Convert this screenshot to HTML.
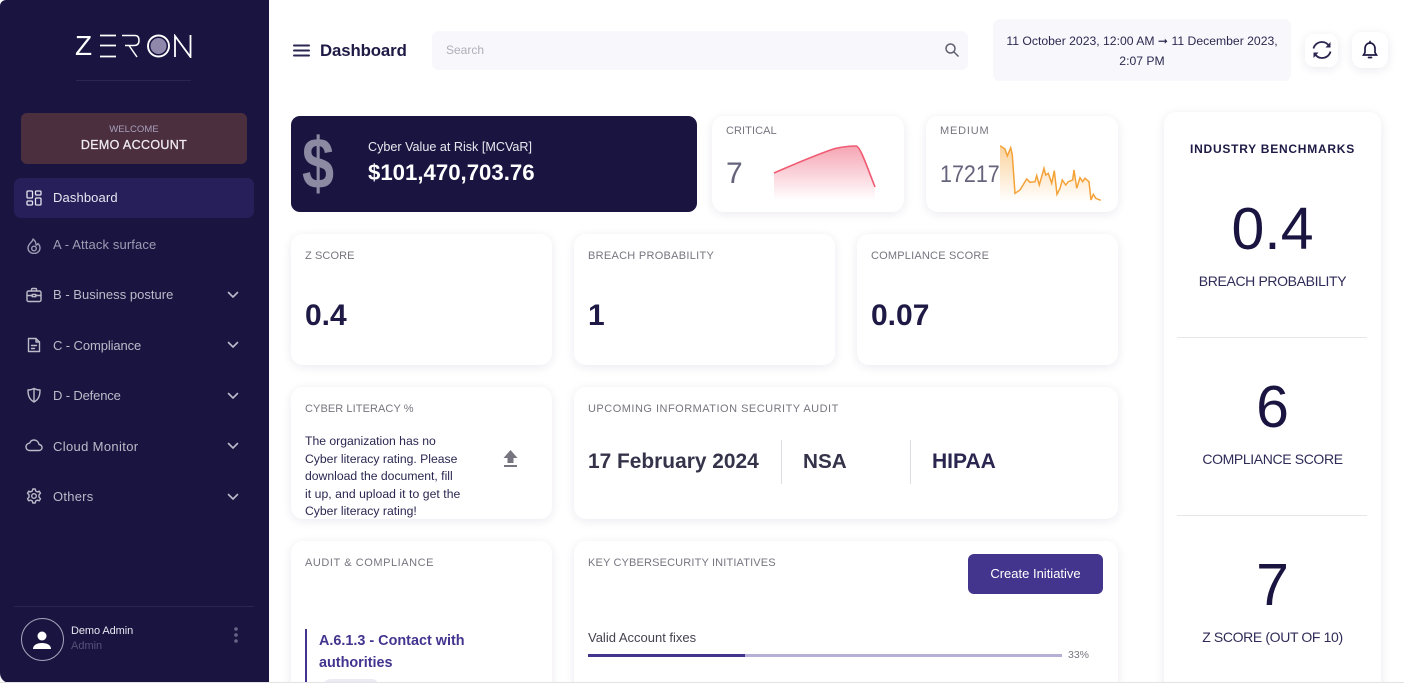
<!DOCTYPE html>
<html><head><meta charset="utf-8"><title>Dashboard</title>
<style>
*{box-sizing:border-box;margin:0;padding:0}
html,body{width:1404px;height:683px;overflow:hidden;background:#fff}
body{position:relative;font-family:"Liberation Sans","Noto Sans CJK JP",sans-serif;color:#1a1440}
.a{position:absolute;white-space:nowrap}
#side{position:absolute;left:0;top:0;width:269px;height:683px;background:#1a1440;border-radius:6px 0 0 10px}
.card{position:absolute;background:#fff;border-radius:12px;box-shadow:0 2px 10px rgba(30,20,80,.09)}
.lbl{position:absolute;font-size:11px;color:#77757f;white-space:nowrap}
.nav{position:absolute;left:53px;font-size:13px;color:#bdbac9;white-space:nowrap;letter-spacing:.12px}
.big{position:absolute;font-size:30px;font-weight:700;color:#1e1a45;white-space:nowrap}
.num{position:absolute;left:1164px;width:217px;text-align:center;font-size:59px;color:#1a1440;line-height:60px}
.cap{position:absolute;left:1164px;width:217px;text-align:center;font-size:14px;letter-spacing:-.37px;color:#2f2b58}
svg{position:absolute;display:block}
.ic{fill:none;stroke:#bdbac9;stroke-width:1.4;stroke-linecap:round;stroke-linejoin:round}
</style></head><body>
<div id="side"></div>

<!-- logo -->
<div class="a" style="left:75px;top:31px;font-size:28px;line-height:30px;color:#fff;font-weight:400">Z</div>
<svg style="left:75px;top:34px" width="117" height="24" viewBox="0 0 117 24" fill="none" stroke="#fff" stroke-width="1.7">
<path d="M25 1.500H41M25 11.500H41M25 22.500H41"/>
<path d="M47 1.500H60Q64 1.500 64 6.500Q64 11.500 59 11.500H50M54 11.500L62 23" stroke-width="1.500"/>
<circle cx="83.500" cy="12" r="10.500" stroke-width="1.900"/>
<circle cx="83.500" cy="12" r="8" fill="#8f88ab" stroke="none"/>
<path d="M100 23V2L115.500 23V1" stroke-width="1.800"/>
</svg>
<div class="a" style="left:76px;top:80px;width:115px;height:1px;background:#2b2552"></div>

<div class="a" style="left:21px;top:113px;width:226px;height:51px;background:#4c2f3f;border-radius:6px"></div>
<div class="a" style="left:21px;top:124px;width:226px;text-align:center;font-size:9.500px;letter-spacing:.05px;color:#a79fba">WELCOME</div>
<div class="a" style="left:21px;top:138px;width:226px;text-align:center;font-size:12.500px;letter-spacing:.35px;color:#f0ecf0;-webkit-text-stroke:.25px #f0ecf0">DEMO ACCOUNT</div>

<div class="a" style="left:14px;top:178px;width:240px;height:40px;background:#261f5a;border-radius:7px"></div>
<svg style="left:26px;top:190px" width="16" height="16" viewBox="0 0 16 16" fill="none" stroke="#e6e4ee" stroke-width="1.300"><rect x="1" y="1" width="5.500" height="7" rx="1"/><rect x="9.500" y="1" width="5.500" height="4" rx="1"/><rect x="1" y="11" width="5.500" height="4" rx="1"/><rect x="9.500" y="8" width="5.500" height="7" rx="1"/></svg>
<div class="nav" style="top:190px;color:#e8e6f0">Dashboard</div>

<svg class="ic" style="left:26px;top:237px;stroke:#9f9bb3" width="16" height="17" viewBox="0 0 16 17"><path d="M7 2C7 5 2 6.500 2 11a6 5.500 0 0 0 12 0C14 9 13 7.500 12 6.500C11.500 7.500 11 8 10 8C10 6 9 3.500 7 2Z"/><circle cx="8" cy="11.500" r="2.300"/></svg>
<div class="nav" style="top:237px;color:#9f9bb3">A - Attack surface</div>

<svg class="ic" style="left:26px;top:287px" width="16" height="16" viewBox="0 0 16 16"><rect x="1" y="4" width="14" height="10.500" rx="1.500"/><path d="M5.500 4V2.500a1 1 0 0 1 1-1h3a1 1 0 0 1 1 1V4M1 8.500H6M10 8.500H15"/><rect x="6.200" y="7.500" width="3.600" height="2.200"/></svg>
<div class="nav" style="top:287px;letter-spacing:.02px">B - Business posture</div>

<svg class="ic" style="left:26px;top:337px" width="16" height="16" viewBox="0 0 16 16"><path d="M2.500 1.500H10L13.500 5V14.500H2.500ZM5.500 8.500H10.500M5.500 11.500H8.500M10 1.500V5H13.500"/></svg>
<div class="nav" style="top:338px;letter-spacing:-.1px">C - Compliance</div>

<svg class="ic" style="left:26px;top:387px" width="16" height="16" viewBox="0 0 16 16"><path d="M8 1.500C10 2.500 12 3 14 3C14 9 12.500 12.500 8 15C3.500 12.500 2 9 2 3C4 3 6 2.500 8 1.500ZM8 1.500V15"/></svg>
<div class="nav" style="top:388px;letter-spacing:-.15px">D - Defence</div>

<svg class="ic" style="left:25px;top:438px" width="18" height="15" viewBox="0 0 18 15"><path d="M4.500 12.500H14C16 12.500 17 11 17 9.500C17 8 16 6.800 14 6.500C13.500 3.800 11.500 2 9 2C7 2 5.500 3 4.800 5C2.500 5.500 1 7 1 9C1 11 2.500 12.500 4.500 12.500Z"/></svg>
<div class="nav" style="top:439px;letter-spacing:.35px">Cloud Monitor</div>

<svg class="ic" style="left:26px;top:488px" width="16" height="16" viewBox="0 0 16 16"><circle cx="8" cy="8" r="2.300"/><path d="M6.800 1H9.200L9.700 3L11.400 3.900L13.300 3.200L14.500 5.300L13 6.700V9.300L14.500 10.700L13.300 12.800L11.400 12.100L9.700 13L9.200 15H6.800L6.300 13L4.600 12.100L2.700 12.800L1.500 10.700L3 9.300V6.700L1.500 5.300L2.700 3.200L4.600 3.900L6.300 3Z"/></svg>
<div class="nav" style="top:489px;letter-spacing:.25px">Others</div>

<svg class="ic" style="left:226px;top:291px;stroke-width:1.600" width="14" height="8" viewBox="0 0 14 8"><path d="M2.500 1.500L7 6L11.500 1.500"/></svg>
<svg class="ic" style="left:226px;top:341px;stroke-width:1.600" width="14" height="8" viewBox="0 0 14 8"><path d="M2.500 1.500L7 6L11.500 1.500"/></svg>
<svg class="ic" style="left:226px;top:392px;stroke-width:1.600" width="14" height="8" viewBox="0 0 14 8"><path d="M2.500 1.500L7 6L11.500 1.500"/></svg>
<svg class="ic" style="left:226px;top:442px;stroke-width:1.600" width="14" height="8" viewBox="0 0 14 8"><path d="M2.500 1.500L7 6L11.500 1.500"/></svg>
<svg class="ic" style="left:226px;top:493px;stroke-width:1.600" width="14" height="8" viewBox="0 0 14 8"><path d="M2.500 1.500L7 6L11.500 1.500"/></svg>

<div class="a" style="left:14px;top:606px;width:240px;height:1px;background:#2b2552"></div>
<div class="a" style="left:21px;top:618px;width:43px;height:43px;border:1px solid #a9a5bd;border-radius:50%"></div>
<svg style="left:31px;top:629px" width="22" height="22" viewBox="0 0 22 22" fill="#fff"><circle cx="11" cy="7" r="4.500"/><path d="M2 20C2 16 6 14 11 14C16 14 20 16 20 20Z"/></svg>
<div class="a" style="left:71px;top:625px;font-size:11px;letter-spacing:-.08px;color:#e8e6f0">Demo Admin</div>
<div class="a" style="left:71px;top:640px;font-size:11px;color:#57517a">Admin</div>
<svg style="left:232px;top:626px" width="8" height="18" fill="#6a6488"><circle cx="4" cy="3" r="1.800"/><circle cx="4" cy="9" r="1.800"/><circle cx="4" cy="15" r="1.800"/></svg>

<!-- header -->
<svg style="left:293px;top:44px" width="17" height="14" fill="#2a2650"><rect y="0.500" width="17" height="2" rx="1"/><rect y="5.500" width="17" height="2" rx="1"/><rect y="10.500" width="17" height="2" rx="1"/></svg>
<div class="a" style="left:320px;top:41px;font-size:16.800px;font-weight:700;color:#1e1a45;letter-spacing:-.1px">Dashboard</div>
<div class="a" style="left:432px;top:31px;width:536px;height:39px;background:#f7f7fc;border-radius:7px"></div>
<div class="a" style="left:446px;top:43px;font-size:12px;color:#b0afb9">Search</div>
<svg style="left:944px;top:42px" width="16" height="16" viewBox="0 0 16 16" fill="none" stroke="#5e5e6e" stroke-width="1.500"><circle cx="6.500" cy="6.500" r="4.500"/><path d="M10 10L14.500 14.500"/></svg>
<div class="a" style="left:993px;top:19px;width:298px;height:62px;background:#f7f7fc;border-radius:7px"></div>
<div class="a" style="left:993px;top:31px;width:298px;text-align:center;font-size:12.200px;line-height:20px;color:#2d2950;white-space:normal;padding:0 10px">11 October 2023, 12:00 AM ➞ 11 December 2023,<br>2:07 PM</div>
<div class="card" style="left:1305px;top:34px;width:33px;height:33px;border-radius:9px"></div>
<svg style="left:1311px;top:39px" width="22" height="22" viewBox="0 0 22 22" fill="none" stroke="#2a2650" stroke-width="1.800"><path d="M2.500 9.500C3.500 5.500 7 3 11 3C14 3 16.500 4.500 18 7"/><path d="M19.500 12.500C18.500 16.500 15 19 11 19C8 19 5.500 17.500 4 15"/><path d="M19.500 3V8.500H14.500Z" fill="#2a2650" stroke="none"/><path d="M2.500 19V13.500H7.500Z" fill="#2a2650" stroke="none"/></svg>
<div class="card" style="left:1352px;top:32px;width:36px;height:36px;border-radius:10px"></div>
<svg style="left:1360px;top:40px" width="20" height="20" viewBox="0 0 20 20" fill="none" stroke="#1e1a45" stroke-width="1.700"><path d="M3.500 15H16.500L15 12.500V8.500C15 5.500 13 3 10 3C7 3 5 5.500 5 8.500V12.500Z"/><path d="M8.500 17.500H11.500M10 1.500V3" stroke-linecap="round"/></svg>

<!-- MCVaR -->
<div class="a" style="left:291px;top:116px;width:406px;height:96px;background:#1a1440;border-radius:9px"></div>
<div class="a" style="left:302px;top:124px;font-size:72px;line-height:80px;color:#8c89a3;font-weight:700;transform:scaleX(.8);transform-origin:left top">$</div>
<div class="a" style="left:368px;top:140px;font-size:12.600px;color:#e9e8ef">Cyber Value at Risk [MCVaR]</div>
<div class="a" style="left:368px;top:160px;font-size:22.200px;font-weight:700;color:#fff">$101,470,703.76</div>

<div class="card" style="left:712px;top:116px;width:192px;height:96px"></div>
<div class="lbl" style="left:726px;top:125px;letter-spacing:.08px">CRITICAL</div>
<div class="a" style="left:726px;top:157px;font-size:30px;color:#66647c">7</div>
<svg style="left:770px;top:140px" width="110" height="62" viewBox="0 0 110 62">
<defs><linearGradient id="g1" x1="0" y1="0" x2="0" y2="1"><stop offset="0" stop-color="#f0748a" stop-opacity=".65"/><stop offset="1" stop-color="#f0748a" stop-opacity="0"/></linearGradient>
<linearGradient id="g2" x1="0" y1="0" x2="0" y2="1"><stop offset="0" stop-color="#f6a63c" stop-opacity=".5"/><stop offset="1" stop-color="#f6a63c" stop-opacity="0"/></linearGradient></defs>
<path d="M4 33C25 24 45 15 65 8.500C72 7 80 6 86 6C90 6 96 24 105 47V60H4Z" fill="url(#g1)"/>
<path d="M4 33C25 24 45 15 65 8.500C72 7 80 6 86 6C90 6 96 24 105 47" fill="none" stroke="#f05a72" stroke-width="1.600"/>
</svg>

<div class="card" style="left:926px;top:116px;width:192px;height:96px"></div>
<div class="lbl" style="left:940px;top:125px;letter-spacing:.8px">MEDIUM</div>
<div class="a" style="left:940px;top:161px;font-size:24px;color:#66647c;transform:scaleX(.895);transform-origin:left top">17217</div>
<svg style="left:1000px;top:140px" width="104" height="64" viewBox="0 0 104 64">
<path d="M0 5.700L5 9L7.300 16L10.700 7.700L12.300 15L15 53.300L20 50L26.700 39L30 42.300L35 41.700L36.700 35.700L39.300 45L44 28.300L45.700 35L48.300 33.300L51.700 43.300L54.300 30.700L57 54.300L60 48.300L62.300 40L65.700 45L68.300 41.700L72.700 40L74 30L76.700 48.300L80 37.700L82.700 41.700L85 38.300L89 41.700L91 60L93.300 54.300L95.700 58.300L100.700 60.300V62H0Z" fill="url(#g2)"/>
<path d="M0 5.700L5 9L7.300 16L10.700 7.700L12.300 15L15 53.300L20 50L26.700 39L30 42.300L35 41.700L36.700 35.700L39.300 45L44 28.300L45.700 35L48.300 33.300L51.700 43.300L54.300 30.700L57 54.300L60 48.300L62.300 40L65.700 45L68.300 41.700L72.700 40L74 30L76.700 48.300L80 37.700L82.700 41.700L85 38.300L89 41.700L91 60L93.300 54.300L95.700 58.300L100.700 60.300" fill="none" stroke="#f4a238" stroke-width="1.500"/>
</svg>

<!-- score row -->
<div class="card" style="left:291px;top:234px;width:261px;height:131px"></div>
<div class="lbl" style="left:305px;top:250px;letter-spacing:.1px">Z SCORE</div>
<div class="big" style="left:305px;top:299px">0.4</div>
<div class="card" style="left:574px;top:234px;width:261px;height:131px"></div>
<div class="lbl" style="left:588px;top:250px;letter-spacing:.28px">BREACH PROBABILITY</div>
<div class="big" style="left:588px;top:299px">1</div>
<div class="card" style="left:857px;top:234px;width:261px;height:131px"></div>
<div class="lbl" style="left:871px;top:250px;letter-spacing:.2px">COMPLIANCE SCORE</div>
<div class="big" style="left:871px;top:299px">0.07</div>

<!-- literacy -->
<div class="card" style="left:291px;top:387px;width:261px;height:132px"></div>
<div class="lbl" style="left:305px;top:403px;letter-spacing:.08px">CYBER LITERACY %</div>
<div class="a" style="left:305px;top:433px;font-size:12.200px;line-height:17.500px;color:#2a2650">The organization has no<br>Cyber literacy rating. Please<br>download the document, fill<br><span style="letter-spacing:.05px">it up, and upload it to get the</span><br>Cyber literacy rating!</div>
<svg style="left:502px;top:449px" width="17" height="19" fill="#77757f"><path d="M8.500 1L15.500 9H11.500V14H5.500V9H1.500Z"/><rect x="2" y="16" width="13" height="2"/></svg>

<!-- audit -->
<div class="card" style="left:574px;top:387px;width:544px;height:132px"></div>
<div class="lbl" style="left:588px;top:403px;letter-spacing:.49px">UPCOMING INFORMATION SECURITY AUDIT</div>
<div class="a" style="left:588px;top:450px;font-size:20.900px;font-weight:700;color:#35334a">17 February 2024</div>
<div class="a" style="left:781px;top:440px;width:1px;height:44px;background:#dcdce2"></div>
<div class="a" style="left:803px;top:450px;font-size:20.700px;font-weight:700;color:#35334a">NSA</div>
<div class="a" style="left:910px;top:440px;width:1px;height:44px;background:#dcdce2"></div>
<div class="a" style="left:932px;top:450px;font-size:21px;font-weight:700;color:#2a2650">HIPAA</div>

<!-- bottom row -->
<div class="card" style="left:291px;top:541px;width:261px;height:160px"></div>
<div class="lbl" style="left:305px;top:557px;letter-spacing:.56px">AUDIT &amp; COMPLIANCE</div>
<div class="a" style="left:305px;top:629px;width:2px;height:60px;background:#42348f"></div>
<div class="a" style="left:319px;top:630px;font-size:14.400px;line-height:22px;font-weight:700;color:#42348f">A.6.1.3 - Contact with<br>authorities</div>
<div class="a" style="left:322px;top:679px;width:58px;height:20px;background:#ecebf3;border-radius:9px"></div>

<div class="card" style="left:574px;top:541px;width:544px;height:160px"></div>
<div class="lbl" style="left:588px;top:557px;letter-spacing:.15px">KEY CYBERSECURITY INITIATIVES</div>
<div class="a" style="left:968px;top:554px;width:135px;height:40px;background:#43358e;border-radius:6px;color:#fff;font-size:13px;line-height:39px;text-align:center">Create Initiative</div>
<div class="a" style="left:588px;top:630px;font-size:13px;color:#45434f">Valid Account fixes</div>
<div class="a" style="left:588px;top:654px;width:474px;height:3px;background:#b7b0d6"></div>
<div class="a" style="left:588px;top:654px;width:157px;height:3px;background:#43358e"></div>
<div class="a" style="left:1068px;top:649px;font-size:10.500px;color:#77757f">33%</div>

<!-- benchmarks -->
<div class="card" style="left:1164px;top:112px;width:217px;height:589px"></div>
<div class="a" style="left:1164px;top:142px;width:217px;text-align:center;font-size:12px;font-weight:700;letter-spacing:.75px;color:#1e1a45">INDUSTRY BENCHMARKS</div>
<div class="num" style="top:199px">0.4</div>
<div class="cap" style="top:273px">BREACH PROBABILITY</div>
<div class="a" style="left:1177px;top:337px;width:190px;height:1px;background:#e5e5ea"></div>
<div class="num" style="top:377px">6</div>
<div class="cap" style="top:451px">COMPLIANCE SCORE</div>
<div class="a" style="left:1177px;top:515px;width:190px;height:1px;background:#e5e5ea"></div>
<div class="num" style="top:555px">7</div>
<div class="cap" style="top:629px">Z SCORE (OUT OF 10)</div>
<div class="a" style="left:0;top:682px;width:1404px;height:1px;background:#e3e3e6"></div>
</body></html>
